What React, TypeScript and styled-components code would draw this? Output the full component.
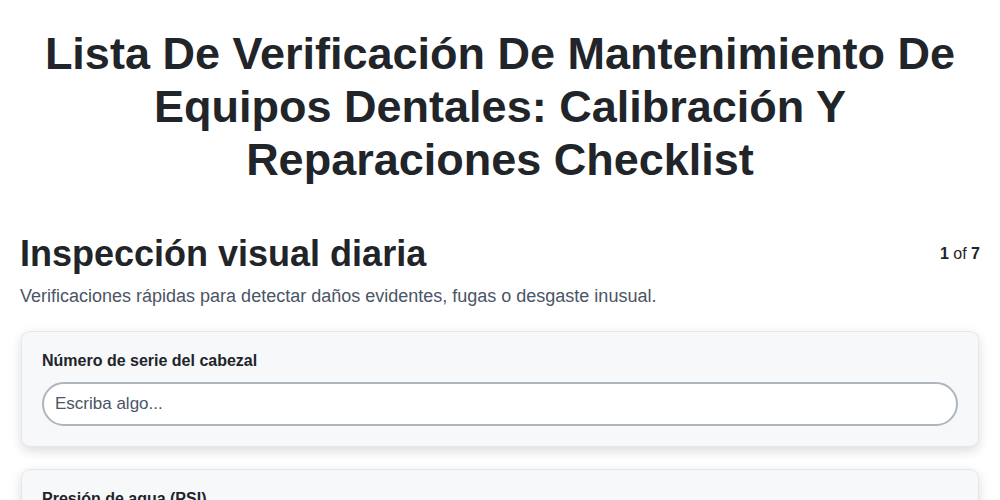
import React from "react";
import styled, { createGlobalStyle } from "styled-components";

const Global = createGlobalStyle`
  * { box-sizing: border-box; }
  body {
    margin: 0;
    background: #ffffff;
    font-family: "Liberation Sans", Arial, sans-serif;
    color: #212529;
  }
`;

const Page = styled.div`
  padding: 27px 20px 0;
`;

const Title = styled.h1`
  margin: 0 auto;
  text-align: center;
  font-size: 45px;
  line-height: 53px;
  font-weight: 700;
  color: #212529;
  max-width: 960px;
`;

const SectionHeader = styled.div`
  display: flex;
  justify-content: space-between;
  align-items: center;
  margin-top: 46px;
`;

const SectionTitle = styled.h2`
  margin: 0;
  font-size: 36px;
  line-height: 44px;
  font-weight: 700;
  color: #212529;
`;

const Progress = styled.div`
  font-size: 16px;
  line-height: 20px;
  color: #212529;
  & b { font-weight: 700; }
`;

const Description = styled.p`
  margin: 7px 0 21px;
  font-size: 18px;
  line-height: 27px;
  color: #4a5565;
`;

const Card = styled.div`
  background: #f7f8fa;
  border: 1px solid #e6e7ec;
  border-radius: 9px;
  box-shadow: 0 4px 12px rgba(0, 0, 0, 0.14);
  padding: 19px 20px 20px;
  margin: 0 1px 22px;
`;

const Label = styled.label`
  display: block;
  font-size: 16px;
  font-weight: 700;
  line-height: 20px;
  color: #212529;
  margin-bottom: 11px;
`;

const Input = styled.input`
  display: block;
  width: 100%;
  height: 44px;
  border: 2px solid #adb5bd;
  border-radius: 22px;
  background: #ffffff;
  padding: 0 11px;
  font-family: "Liberation Sans", Arial, sans-serif;
  font-size: 17px;
  color: #212529;
  outline: none;
  &::placeholder { color: #4a5565; }
`;

export default function App() {
  return (
    <>
      <Global />
      <Page>
        <Title>
          Lista De Verificación De Mantenimiento De Equipos Dentales: Calibración Y Reparaciones Checklist
        </Title>
        <SectionHeader>
          <SectionTitle>Inspección visual diaria</SectionTitle>
          <Progress>
            <b>1</b> of <b>7</b>
          </Progress>
        </SectionHeader>
        <Description>
          Verificaciones rápidas para detectar daños evidentes, fugas o desgaste inusual.
        </Description>
        <Card>
          <Label>Número de serie del cabezal</Label>
          <Input placeholder="Escriba algo..." />
        </Card>
        <Card>
          <Label>Presión de agua (PSI)</Label>
          <Input placeholder="Escriba algo..." />
        </Card>
      </Page>
    </>
  );
}
